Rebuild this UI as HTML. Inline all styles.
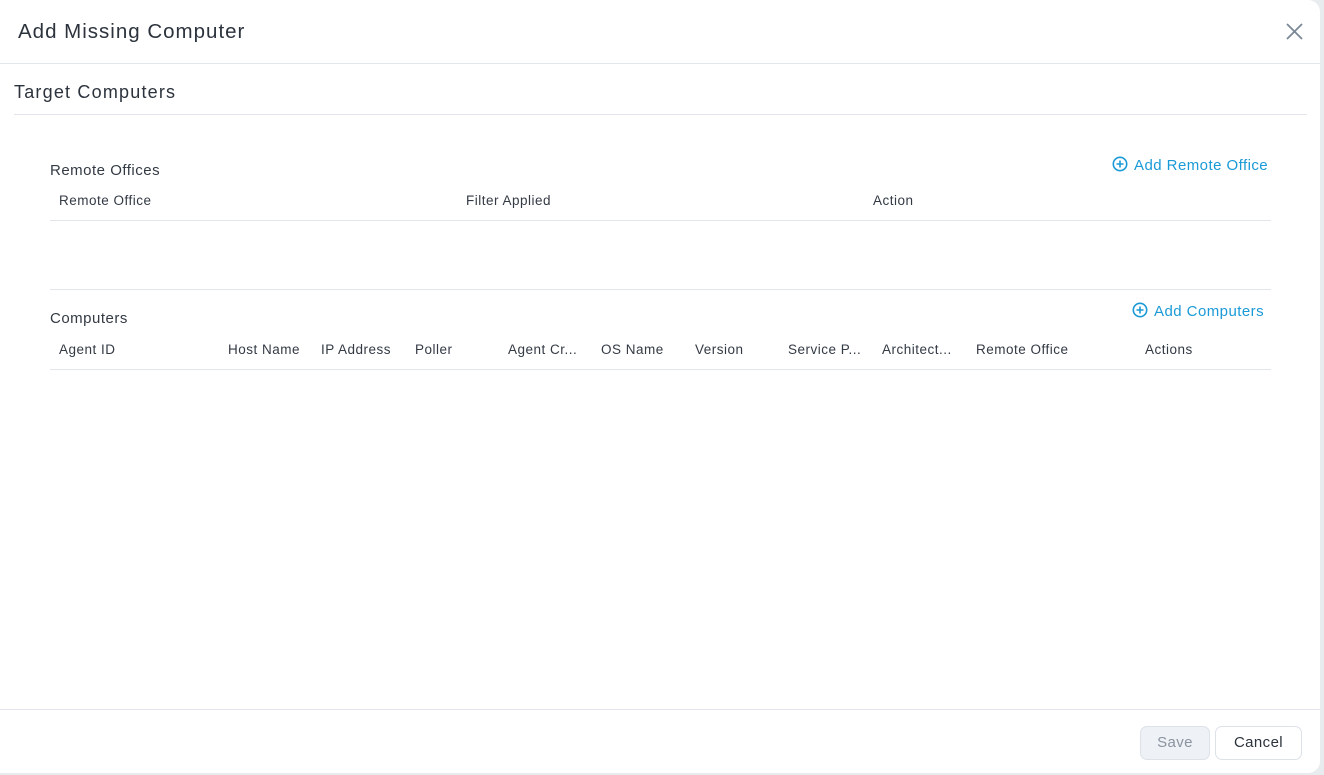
<!DOCTYPE html>
<html><head><style>
body{margin:0;width:1324px;height:775px;background:#e9ecef;font-family:"Liberation Sans",sans-serif;overflow:hidden;position:relative}
.m{position:absolute;left:0;top:0;width:1320px;height:773px;background:#fff;border-radius:0 12px 12px 0}
.t{position:absolute;white-space:nowrap}
.ln{position:absolute;height:1px;background:#e2e6ec}
.h{font-size:13.5px;color:#333a44;top:342px;letter-spacing:0.5px}
.a{color:#1a9ad6;font-size:15px;letter-spacing:0.45px}
</style></head><body><div class="m">
<div class="t" style="left:18px;top:20px;font-size:20.5px;color:#2c333d;letter-spacing:1px">Add Missing Computer</div>
<svg class="t" style="left:1286px;top:23px" width="17" height="17"><path d="M1 1L16 16M16 1L1 16" stroke="#7a8796" stroke-width="1.8"/></svg>
<div class="ln" style="left:0;top:63px;width:1320px"></div>
<div class="t" style="left:14px;top:82px;font-size:18px;color:#2c333d;letter-spacing:1.2px">Target Computers</div>
<div class="ln" style="left:14px;top:114px;width:1293px"></div>
<div class="t" style="left:50px;top:162px;font-size:15px;color:#333a44;letter-spacing:0.5px">Remote Offices</div>
<div class="t a" style="left:1112px;top:156px"><svg width="16" height="16" style="vertical-align:-2px;margin-right:6px"><circle cx="8" cy="8" r="6.7" fill="none" stroke="#1a9ad6" stroke-width="1.6"/><path d="M8 4.5v7M4.5 8h7" stroke="#1a9ad6" stroke-width="1.6"/></svg>Add Remote Office</div>
<div class="t h" style="left:59px;top:193px">Remote Office</div>
<div class="t h" style="left:466px;top:193px">Filter Applied</div>
<div class="t h" style="left:873px;top:193px">Action</div>
<div class="ln" style="left:50px;top:220px;width:1221px"></div>
<div class="ln" style="left:50px;top:289px;width:1221px"></div>
<div class="t" style="left:50px;top:310px;font-size:15px;color:#333a44;letter-spacing:0.5px">Computers</div>
<div class="t a" style="left:1132px;top:302px"><svg width="16" height="16" style="vertical-align:-2px;margin-right:6px"><circle cx="8" cy="8" r="6.7" fill="none" stroke="#1a9ad6" stroke-width="1.6"/><path d="M8 4.5v7M4.5 8h7" stroke="#1a9ad6" stroke-width="1.6"/></svg>Add Computers</div>
<div class="t h" style="left:59px">Agent ID</div>
<div class="t h" style="left:228px">Host Name</div>
<div class="t h" style="left:321px">IP Address</div>
<div class="t h" style="left:415px">Poller</div>
<div class="t h" style="left:508px">Agent Cr...</div>
<div class="t h" style="left:601px">OS Name</div>
<div class="t h" style="left:695px">Version</div>
<div class="t h" style="left:788px">Service P...</div>
<div class="t h" style="left:882px">Architect...</div>
<div class="t h" style="left:976px">Remote Office</div>
<div class="t h" style="left:1145px">Actions</div>
<div class="ln" style="left:50px;top:369px;width:1221px"></div>
<div class="ln" style="left:0;top:709px;width:1320px"></div>
<div class="t" style="left:1140px;top:726px;width:68px;height:32px;border:1px solid #dde2e9;background:#eef1f6;border-radius:7px;color:#8a939e;font-size:15px;text-align:center;line-height:32px;letter-spacing:0.4px">Save</div>
<div class="t" style="left:1215px;top:726px;width:85px;height:32px;border:1px solid #dde2e9;background:#fff;border-radius:7px;color:#2c333d;font-size:15px;text-align:center;line-height:32px;letter-spacing:0.4px">Cancel</div>
</div></body></html>
